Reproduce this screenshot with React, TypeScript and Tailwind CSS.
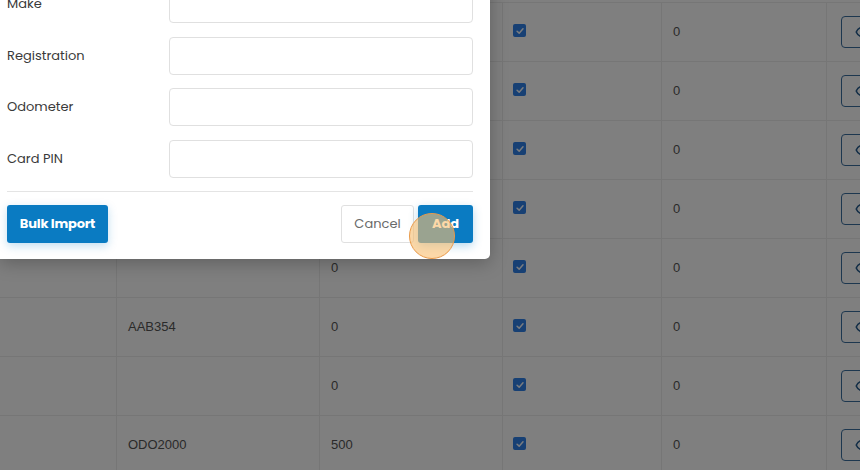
import React from 'react';
import { Eye } from 'lucide-react';

type Row = { id: number; reg: string; odo: string; balance: string };

const rows: Row[] = [
  { id: 1, reg: 'HJK221', odo: '0', balance: '0' },
  { id: 2, reg: '', odo: '0', balance: '0' },
  { id: 3, reg: 'TRK009', odo: '0', balance: '0' },
  { id: 4, reg: '', odo: '0', balance: '0' },
  { id: 5, reg: '', odo: '0', balance: '0' },
  { id: 6, reg: 'AAB354', odo: '0', balance: '0' },
  { id: 7, reg: '', odo: '0', balance: '0' },
  { id: 8, reg: 'ODO2000', odo: '500', balance: '0' },
];

const fields = ['Make', 'Registration', 'Odometer', 'Card PIN'];

function CheckBox() {
  return (
    <span className="mb-[3px] flex h-[13px] w-[13px] items-center justify-center rounded-[2px] bg-[#2e80e8]">
      <svg viewBox="0 0 12 12" className="h-[10px] w-[10px]">
        <path d="M2.5 6.3 L5 8.6 L9.6 3.4" fill="none" stroke="#f4f8ff" strokeWidth="1.8" strokeLinecap="round" strokeLinejoin="round" />
      </svg>
    </span>
  );
}

function VehicleTable() {
  return (
    <div className="mt-[2px] border-t border-[#ececec] font-['Liberation_Sans',sans-serif] text-[13px] text-[#555]">
      {rows.map((row) => (
        <div
          key={row.id}
          className="grid h-[59px] grid-cols-[117px_203px_183px_159px_165px_1fr] border-b border-[#ececec]"
        >
          <div className="border-r border-[#ececec]" />
          <div className="flex items-center border-r border-[#ececec] pl-[11px]">{row.reg}</div>
          <div className="flex items-center border-r border-[#ececec] pl-[11px]">{row.odo}</div>
          <div className="flex items-center border-r border-[#ececec] pl-[10px]">
            <CheckBox />
          </div>
          <div className="flex items-center border-r border-[#ececec] pl-[11px]">{row.balance}</div>
          <div className="flex items-center pl-[14px]">
            <button
              type="button"
              className="flex h-[32px] w-[44px] shrink-0 items-center justify-center rounded-[4px] border border-[#3b6f9f] text-[#245a8c]"
            >
              <Eye size={16} strokeWidth={2.4} />
            </button>
          </div>
        </div>
      ))}
    </div>
  );
}

function AddVehicleModal() {
  return (
    <div className="absolute left-0 top-[-39px] w-[490px] rounded-br-[5px] bg-white px-[7px] pb-[16px] pr-[17px] pt-[24px] font-['Poppins','Open_Sans',sans-serif] shadow-[0_4px_18px_rgba(0,0,0,0.25)]">
      <div className="flex flex-col gap-[13.5px]">
        {fields.map((label) => (
          <div key={label} className="flex items-center">
            <label className="w-[162px] text-[13px] text-[#3a3a3a]">{label}</label>
            <input
              type="text"
              className="h-[38px] flex-1 rounded-[4px] border border-[#e0e0e0] bg-white px-3 text-[13px] outline-none"
            />
          </div>
        ))}
      </div>
      <div className="mt-[13px] border-t border-[#e4e4e4]" />
      <div className="mt-[13px] flex items-center">
        <button
          type="button"
          className="h-[38px] w-[101px] rounded-[3px] bg-[#0a7bc2] text-[13px] font-bold tracking-[-0.2px] text-white shadow-[0_3px_10px_rgba(10,123,194,0.25)]"
        >
          Bulk Import
        </button>
        <div className="ml-auto flex gap-[4px]">
          <button
            type="button"
            className="h-[38px] w-[73px] rounded-[3px] border border-[#e0e0e0] bg-white text-[13px] text-[#6a6a6a]"
          >
            Cancel
          </button>
          <button
            type="button"
            className="h-[38px] w-[55px] rounded-[3px] bg-[#0a7bc2] text-[13px] font-bold text-white shadow-[0_3px_10px_rgba(10,123,194,0.3)]"
          >
            Add
          </button>
        </div>
      </div>
    </div>
  );
}

export default function App(): React.JSX.Element {
  return (
    <div className="relative h-[470px] w-[860px] overflow-hidden bg-white">
      <VehicleTable />
      <div className="absolute inset-0 bg-black/50" />
      <AddVehicleModal />
      <div className="absolute left-[409px] top-[213px] h-[46px] w-[46px] rounded-full border border-[#e99a4a] bg-[rgba(250,190,110,0.6)]" />
    </div>
  );
}
